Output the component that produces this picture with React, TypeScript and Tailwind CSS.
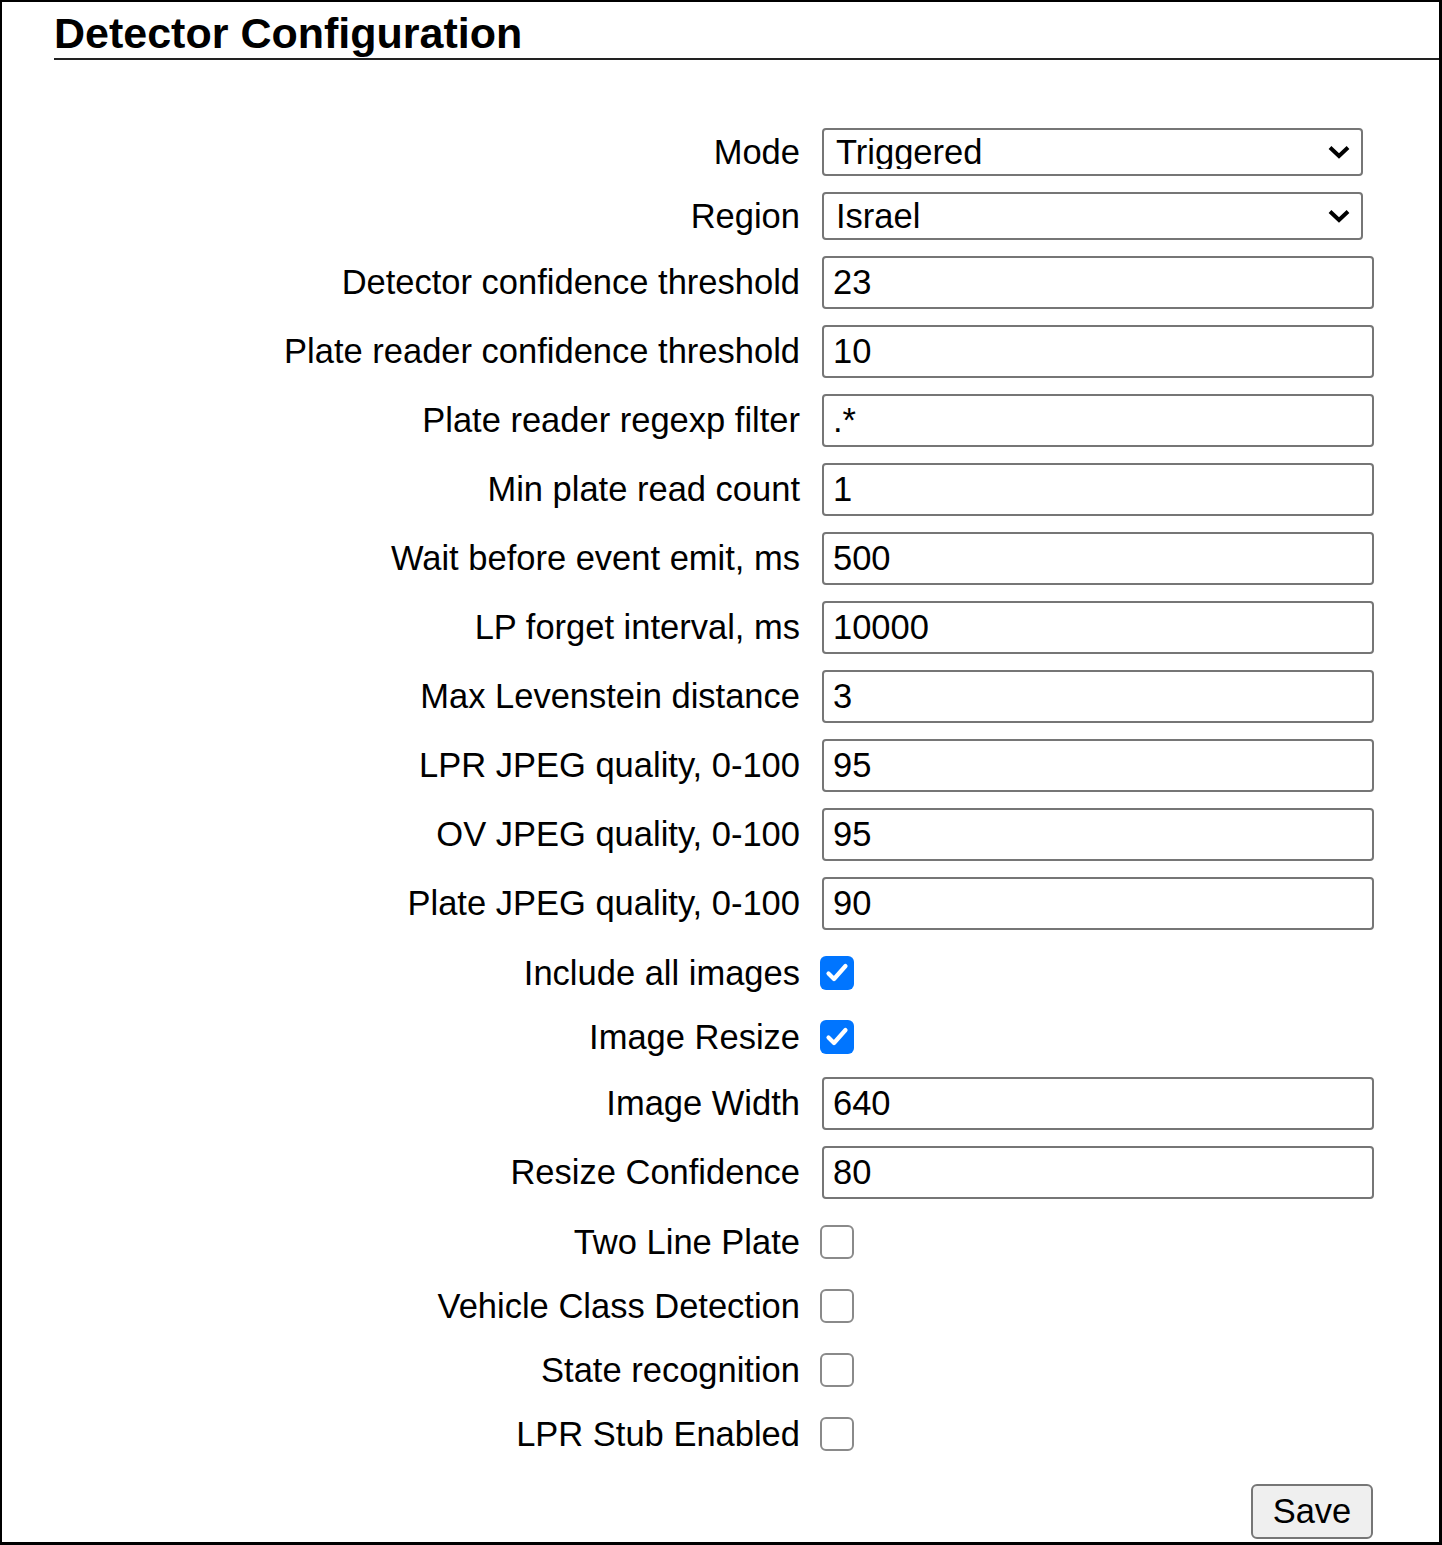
import { useState } from "react";

type Row =
  | { kind: "select"; label: string; value: string; options: string[] }
  | { kind: "text"; label: string; value: string }
  | { kind: "check"; label: string; value: boolean; first?: boolean };

const rows: Row[] = [
  { kind: "select", label: "Mode", value: "Triggered", options: ["Triggered", "Continuous"] },
  { kind: "select", label: "Region", value: "Israel", options: ["Israel", "Europe", "USA"] },
  { kind: "text", label: "Detector confidence threshold", value: "23" },
  { kind: "text", label: "Plate reader confidence threshold", value: "10" },
  { kind: "text", label: "Plate reader regexp filter", value: ".*" },
  { kind: "text", label: "Min plate read count", value: "1" },
  { kind: "text", label: "Wait before event emit, ms", value: "500" },
  { kind: "text", label: "LP forget interval, ms", value: "10000" },
  { kind: "text", label: "Max Levenstein distance", value: "3" },
  { kind: "text", label: "LPR JPEG quality, 0-100", value: "95" },
  { kind: "text", label: "OV JPEG quality, 0-100", value: "95" },
  { kind: "text", label: "Plate JPEG quality, 0-100", value: "90" },
  { kind: "check", label: "Include all images", value: true, first: true },
  { kind: "check", label: "Image Resize", value: true },
  { kind: "text", label: "Image Width", value: "640" },
  { kind: "text", label: "Resize Confidence", value: "80" },
  { kind: "check", label: "Two Line Plate", value: false, first: true },
  { kind: "check", label: "Vehicle Class Detection", value: false },
  { kind: "check", label: "State recognition", value: false },
  { kind: "check", label: "LPR Stub Enabled", value: false },
];

function Chevron() {
  return (
    <svg
      className="pointer-events-none absolute right-[12px] top-1/2 -translate-y-1/2"
      width="24"
      height="16"
      viewBox="0 0 24 16"
    >
      <path d="M3 3.5 L12 12 L21 3.5" fill="none" stroke="#000" strokeWidth="4" strokeLinejoin="miter" />
    </svg>
  );
}

function Checkbox({ initial }: { initial: boolean }) {
  const [on, setOn] = useState(initial);
  return (
    <label className="relative ml-[-2px] flex h-[34px] w-[34px] cursor-pointer">
      <input
        type="checkbox"
        checked={on}
        onChange={(e) => setOn(e.target.checked)}
        className={`h-[34px] w-[34px] appearance-none rounded-[6px] ${
          on ? "bg-[#0075ff]" : "border-2 border-[#8a8a8a] bg-white"
        }`}
      />
      {on && (
        <svg className="pointer-events-none absolute inset-0" width="34" height="34" viewBox="0 0 34 34">
          <path d="M8.5 17.5 L14 23 L25.5 10" fill="none" stroke="#fff" strokeWidth="4.2" strokeLinecap="round" strokeLinejoin="round" />
        </svg>
      )}
    </label>
  );
}

export default function App() {
  return (
    <div className="h-[1545px] w-[1442px] border-t-2 border-l-2 border-r-[3px] border-b-[3px] border-black bg-white font-['Liberation_Sans',Arial,sans-serif] text-black">
      {/* Header */}
      <h1 className="ml-[52px] border-b-2 border-[#222] pt-[6px] text-[43px] font-bold leading-[50px]">
        Detector Configuration
      </h1>

      <form className="mt-[60px] flex flex-col" onSubmit={(e) => e.preventDefault()}>
        {rows.map((r) => (
          <div
            key={r.label}
            className={`flex items-center ${
              r.kind === "text" ? "h-[69px]" : r.kind === "check" && r.first ? "h-[67px] pt-[3px]" : "h-[64px]"
            }`}
          >
            <span className="w-[798px] text-right text-[34.5px] leading-none whitespace-nowrap">{r.label}</span>
            <div className="ml-[22px] flex">
              {r.kind === "select" && (
                <div className="relative">
                  <select
                    defaultValue={r.value}
                    className="h-[48px] w-[541px] appearance-none rounded-[4px] border-2 border-[#767676] bg-white pl-[12px] text-[34.5px] leading-none outline-none"
                  >
                    {r.options.map((o) => (
                      <option key={o}>{o}</option>
                    ))}
                  </select>
                  <Chevron />
                </div>
              )}
              {r.kind === "text" && (
                <input
                  type="text"
                  defaultValue={r.value}
                  className="h-[53px] w-[552px] rounded-[4px] border-2 border-[#767676] bg-white px-[9px] text-[34.5px] leading-none outline-none"
                />
              )}
              {r.kind === "check" && <Checkbox initial={r.value} />}
            </div>
          </div>
        ))}

        {/* Save */}
        <div className="mt-[18px] flex w-[1371px] justify-end">
          <button
            type="submit"
            className="h-[55px] w-[122px] rounded-[6px] border-2 border-[#767676] bg-[#efefef] text-[34.5px] leading-none"
          >
            Save
          </button>
        </div>
      </form>
    </div>
  );
}
